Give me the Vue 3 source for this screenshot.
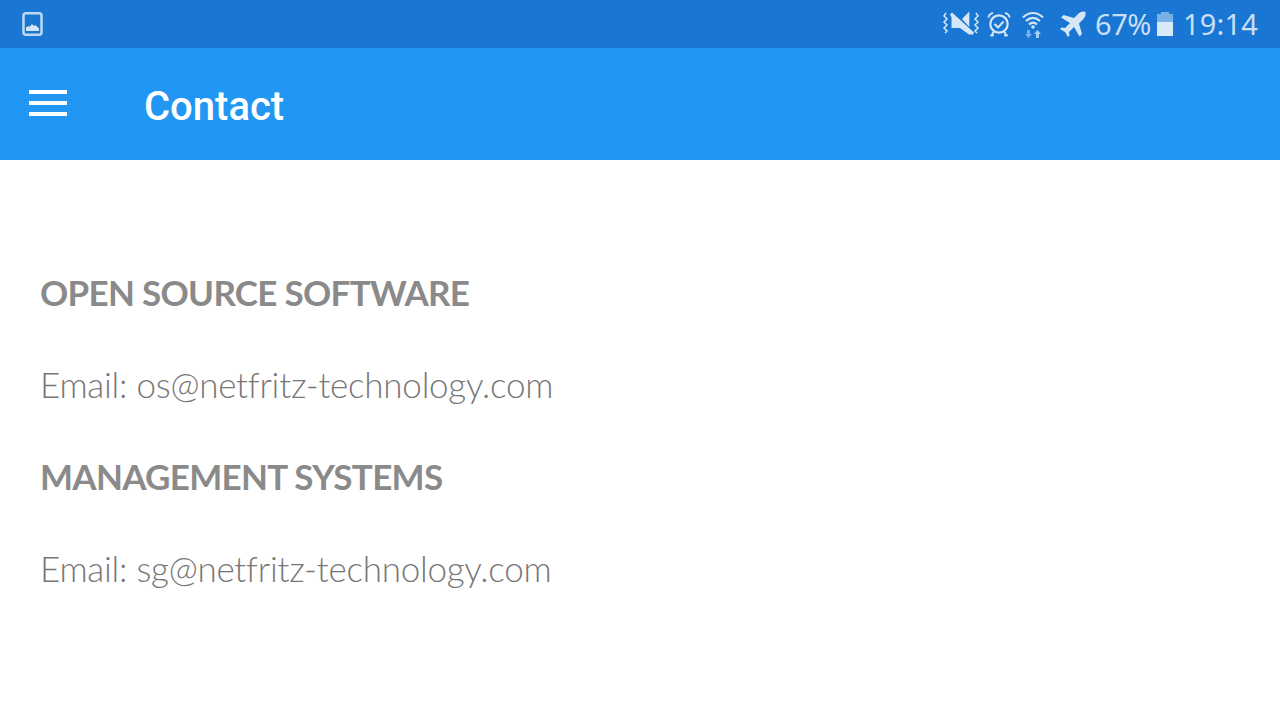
<template>
  <div class="screen">
    <div class="status-bar">
      <svg class="gallery" width="24" height="26" viewBox="0 0 24 26">
        <rect x="3.500" y="2.250" width="18" height="21.500" rx="2.500" fill="none" stroke="#bbdaf6" stroke-width="2.500" />
        <path d="M6 20v-3.500l2.500-1.500 1 1 2.500-3 2 2 1.500-1 3.500 3.500v2.500z" fill="#d5e6f8" />
      </svg>
      <div class="status-right">
        <svg class="mute" width="38" height="26" viewBox="0 0 38 26">
          <path d="M4 2l-2 3 3 3-3 3 3 3-3 3 3 3-2 2M34 2l2 3-3 3 3 3-3 3 3 3-3 3 2 2" fill="none" stroke="#d5e6f8" stroke-width="1.500" />
          <path d="M20 8l7.300-7.500V16z" fill="#d5e6f8" />
          <path d="M8 3.500l2-2 22 20-1 2h-4l-9-6.500H9.500V6z" fill="#d5e6f8" />
        </svg>
        <svg class="alarm" width="24" height="26" viewBox="0 0 24 26">
          <circle cx="12" cy="13" r="8.700" fill="none" stroke="#d5e6f8" stroke-width="2.200" />
          <path d="M7.500 13l3.500 3.500 5.500-6" fill="none" stroke="#d5e6f8" stroke-width="2" />
          <path d="M1.500 6.500c0-2 2-4 4.500-4.500M22.500 6.500c0-2-2-4-4.500-4.500M6.500 21l-2 4M17.500 21l2 4" fill="none" stroke="#d5e6f8" stroke-width="2" />
          <path d="M3 24.500h4M17 24.500h4" fill="none" stroke="#d5e6f8" stroke-width="1.500" />
        </svg>
        <svg class="wifi" width="24" height="28" viewBox="0 0 24 28">
          <path d="M2 7.500c6-6 14-6 20 0M5 11c4.500-4 9.500-4 14 0M8 14.500c2.500-2.500 5.500-2.500 8 0" fill="none" stroke="#d5e6f8" stroke-width="2.200" />
          <circle cx="12" cy="17" r="1.800" fill="#d5e6f8" />
          <path d="M6 20h3v4h2l-3.500 4L4 24h2z" fill="#78b0e8" />
          <path d="M15 28v-4h-2l3.500-4 3.500 4h-2v4z" fill="#a8cdf2" />
        </svg>
        <svg class="plane" width="26" height="26" viewBox="0 0 26 26">
          <path d="M25 1c-2-1-5 0-7 2l-4 4L3.500 4 1 6.500l9 5.500-5 5-3.500-.5L0 18l5 3 3 5 1.500-1.500L9 21l5-5 5.500 9.500 2.500-2.500-3-10.500 4-4c2-2 3-5 2.500-7.500z" fill="#d5e6f8" />
        </svg>
        <span class="pct">67%</span>
        <div class="battery">
          <div class="battery-cap"></div>
          <div class="battery-empty"></div>
          <div class="battery-fill"></div>
        </div>
        <span class="clock">19:14</span>
      </div>
    </div>
    <header class="app-bar">
      <div class="menu">
        <span></span>
        <span></span>
        <span></span>
      </div>
      <h1>Contact</h1>
    </header>
    <main class="content">
      <h2>OPEN SOURCE SOFTWARE</h2>
      <p>Email: os@netfritz-technology.com</p>
      <h2>MANAGEMENT SYSTEMS</h2>
      <p>Email: sg@netfritz-technology.com</p>
    </main>
  </div>
</template>

<script setup>
</script>

<style>
html, body {
  margin: 0;
  background: #fff;
}
</style>

<style scoped>
.screen {
  width: 1280px;
  height: 720px;
  overflow: hidden;
  display: flex;
  flex-direction: column;
  background: #fff;
}

.status-bar {
  height: 48px;
  background: #1976d2;
  display: flex;
  align-items: center;
  justify-content: space-between;
  padding: 0 22px 0 20px;
  flex-shrink: 0;
}

.status-right {
  display: flex;
  align-items: center;
  color: #c8dff7;
  font-family: "Noto Sans", "Open Sans", sans-serif;
}

.mute { margin-right: 7px; }
.alarm { margin-right: 10px; }
.wifi { margin-right: 15px; }
.plane { margin-right: 9px; }

.pct {
  font-size: 29px;
  line-height: 48px;
  letter-spacing: -0.5px;
  margin-right: 6px;
}

.battery {
  width: 16px;
  height: 24px;
  display: flex;
  flex-direction: column;
  align-items: center;
  margin-right: 10px;
}

.battery-cap {
  width: 8px;
  height: 2px;
  background: #78b0e8;
}

.battery-empty {
  width: 16px;
  height: 8px;
  background: #78b0e8;
}

.battery-fill {
  width: 16px;
  height: 14px;
  background: #dae9fa;
}

.clock {
  font-size: 29px;
  line-height: 48px;
  letter-spacing: 0.2px;
}

.app-bar {
  height: 112px;
  background: #2196f3;
  display: flex;
  align-items: center;
  flex-shrink: 0;
}

.menu {
  width: 38px;
  margin-left: 29px;
  margin-right: 77px;
  margin-top: -2px;
  display: flex;
  flex-direction: column;
  gap: 7px;
}

.menu span {
  display: block;
  height: 4px;
  background: #fff;
}

h1 {
  margin: 6px 0 0;
  font-family: Roboto, sans-serif;
  font-weight: 500;
  font-size: 40px;
  line-height: 48px;
  color: #fff;
}

.content {
  padding: 108px 40px 0;
  font-family: Lato, "Open Sans", sans-serif;
  color: #8a8a8a;
}

h2 {
  margin: 0;
  font-size: 35px;
  line-height: 48px;
  font-weight: 700;
  letter-spacing: -0.7px;
}

p {
  margin: 44px 0 44px;
  font-size: 35px;
  line-height: 48px;
  font-weight: 300;
  letter-spacing: -0.25px;
  color: #777;
}
</style>
